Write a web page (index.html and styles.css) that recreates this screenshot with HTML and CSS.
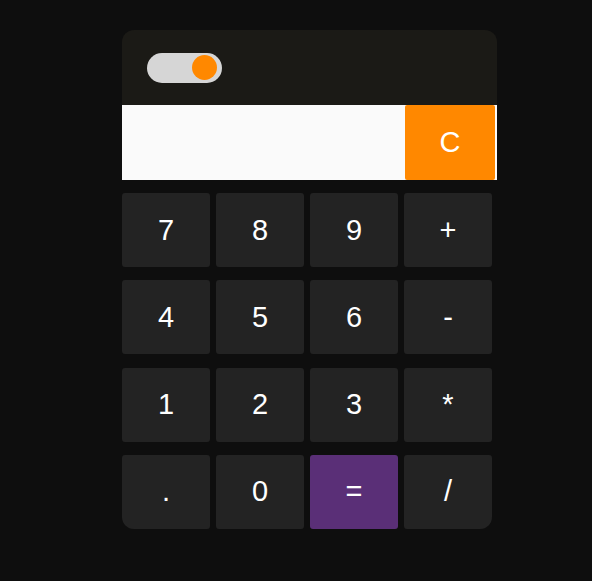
FILE: index.html
```html
<!DOCTYPE html>
<html lang="en">
<head>
<meta charset="utf-8">
<title>Calculator</title>
<link rel="stylesheet" href="styles.css">
</head>
<body>
<div class="calc">
  <div class="header">
    <div class="toggle"><span class="knob"></span></div>
  </div>
  <div class="display">
    <input class="screen" type="text" value="" aria-label="display">
    <button class="btn-clear">C</button>
  </div>
  <div class="keys">
    <button class="key">7</button>
    <button class="key">8</button>
    <button class="key">9</button>
    <button class="key">+</button>
    <button class="key">4</button>
    <button class="key">5</button>
    <button class="key">6</button>
    <button class="key">-</button>
    <button class="key">1</button>
    <button class="key">2</button>
    <button class="key">3</button>
    <button class="key">*</button>
    <button class="key">.</button>
    <button class="key">0</button>
    <button class="key key-equal">=</button>
    <button class="key">/</button>
  </div>
</div>
</body>
</html>
```
FILE: styles.css
```css
* { box-sizing: border-box; }
html, body { margin: 0; padding: 0; }
body {
  background: #0e0e0e;
  font-family: "Liberation Sans", Arial, sans-serif;
  padding: 30px 0 0 122px;
  height: 581px;
}
.calc {
  width: 375px;
}
.header {
  height: 75px;
  background: #1b1a16;
  border-radius: 12px 12px 0 0;
  display: flex;
  align-items: center;
  padding: 0 0 0 25px;
}
.toggle {
  width: 75px;
  height: 30px;
  border-radius: 15px;
  background: #d6d6d6;
  display: flex;
  align-items: center;
  justify-content: flex-end;
  padding-right: 5px;
}
.knob {
  width: 25px;
  height: 25px;
  border-radius: 50%;
  background: #ff8800;
}
.display {
  height: 75px;
  background: #fafafa;
  display: flex;
}
.screen {
  flex: 1;
  min-width: 0;
  border: none;
  outline: none;
  background: transparent;
  font-family: inherit;
  font-size: 29px;
  padding: 0 10px;
}
.btn-clear {
  width: 90px;
  margin-right: 2px;
  border: none;
  border-radius: 2px;
  background: #ff8800;
  color: #fff;
  font-family: inherit;
  font-size: 29px;
  padding: 0;
}
.keys {
  width: 370px;
  margin-top: 13px;
  display: grid;
  grid-template-columns: repeat(4, 88px);
  grid-auto-rows: 74px;
  column-gap: 6px;
  row-gap: 13.3px;
  border-radius: 0 0 12px 12px;
  overflow: hidden;
}
.key {
  border: none;
  border-radius: 3px;
  background: #232323;
  color: #fff;
  font-family: inherit;
  font-size: 29px;
  padding: 0;
}
.key-equal {
  background: #5a2f77;
}
```
